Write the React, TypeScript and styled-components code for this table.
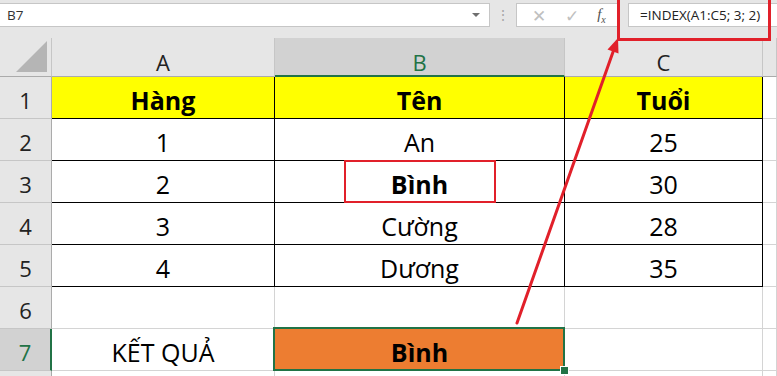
import { Fragment } from "react"
import styled, { createGlobalStyle } from "styled-components"

const GlobalStyle = createGlobalStyle`
    html, body {
        margin: 0;
        padding: 0;
        background: #ffffff;
    }
    * { box-sizing: border-box; }
`

const GREEN = '#217346'
const RED = '#e1202a'
const GRID = '#d4d4d4'

const Window = styled.div`
    position: relative;
    width: 777px;
    height: 376px;
    overflow: hidden;
    background: #ffffff;
    font-family: "Open Sans", "Noto Sans", sans-serif;
`

const FormulaBar = styled.div`
    display: flex;
    align-items: flex-start;
    height: 38px;
    padding-top: 3px;
    background: #e6e6e6;
`

const NameBox = styled.div`
    display: flex;
    align-items: center;
    justify-content: space-between;
    width: 490px;
    height: 24px;
    padding: 0 9px 0 7px;
    background: #ffffff;
    border: 1px solid #c6c6c6;
    border-left: none;
    font-size: 13.5px;
    color: #333333;
`

const Caret = styled.span`
    width: 0;
    height: 0;
    border-left: 4px solid transparent;
    border-right: 4px solid transparent;
    border-top: 4px solid #6f6f6f;
`

const Grip = styled.span`
    width: 26px;
    text-align: center;
    line-height: 24px;
    font-size: 14px;
    color: #a6a6a6;
`

const ActionBox = styled.div`
    display: flex;
    align-items: center;
    justify-content: space-around;
    width: 104px;
    height: 24px;
    padding: 0 4px 0 6px;
    background: #ffffff;
    border: 1px solid #c6c6c6;
`

const Action = styled.span<{ $dim?: boolean }>`
    font-size: 17px;
    line-height: 1;
    color: ${p => p.$dim ? '#c0c0c0' : '#505050'};
`

const Fx = styled.span`
    font-family: "Liberation Serif", "DejaVu Serif", serif;
    font-style: italic;
    font-size: 15px;
    color: #505050;
    sub { font-size: 10px; }
`

const FormulaWrap = styled.div`
    position: relative;
    flex: 1;
    padding-left: 8px;

    &::after {
        content: '';
        position: absolute;
        left: -3px;
        top: -6px;
        width: 148px;
        height: 38px;
        border: 3px solid ${RED};
        pointer-events: none;
    }
`

const FormulaInput = styled.div`
    height: 24px;
    padding-left: 11px;
    background: #ffffff;
    border: 1px solid #c6c6c6;
    border-right: none;
    font-size: 13.5px;
    line-height: 22px;
    color: #222222;
`

const Sheet = styled.div`
    display: grid;
    grid-template-columns: 52px 223px 290px 198px 1fr;
    grid-template-rows: 39px repeat(7, 42px) 1fr;
    height: 338px;
`

const Corner = styled.div`
    display: flex;
    align-items: flex-end;
    justify-content: flex-end;
    padding: 0 4px 4px 0;
    background: #e6e6e6;
    border-right: 1px solid #c6c6c6;
    border-bottom: 1px solid #ababab;
`

const SelectAll = styled.span`
    width: 31px;
    height: 31px;
    background: #b5b5b5;
    clip-path: polygon(100% 0, 100% 100%, 0 100%);
`

const ColHead = styled.div<{ $active?: boolean }>`
    display: flex;
    align-items: center;
    justify-content: center;
    padding-top: 10px;
    font-size: 22px;
    background: ${p => p.$active ? '#d2d2d2' : '#e6e6e6'};
    color: ${p => p.$active ? GREEN : '#222222'};
    border-right: 1px solid #c6c6c6;
    border-bottom: ${p => p.$active ? `2px solid ${GREEN}` : '1px solid #ababab'};
`

const RowHead = styled.div<{ $active?: boolean }>`
    display: flex;
    align-items: center;
    justify-content: center;
    padding-top: 5px;
    font-size: 22px;
    background: ${p => p.$active ? '#d2d2d2' : '#e6e6e6'};
    color: ${p => p.$active ? GREEN : '#222222'};
    border-right: ${p => p.$active ? `2px solid ${GREEN}` : '1px solid #ababab'};
    border-bottom: 1px solid #c6c6c6;
`

const Cell = styled.div<{ $fill?: string; $bold?: boolean; $ruled?: boolean; $selected?: boolean }>`
    position: relative;
    display: flex;
    align-items: center;
    justify-content: center;
    padding-top: 5px;
    font-size: 25px;
    font-weight: ${p => p.$bold ? 700 : 400};
    color: #000000;
    background: ${p => p.$fill ?? '#ffffff'};
    border-right: 1px solid ${p => p.$ruled ? '#000000' : GRID};
    border-bottom: 1px solid ${p => p.$ruled ? '#000000' : GRID};

    ${p => p.$selected && `
        &::after {
            content: '';
            position: absolute;
            left: -2px;
            top: -2px;
            right: -1px;
            bottom: -1px;
            border: 2px solid ${GREEN};
            z-index: 1;
        }
        &::before {
            content: '';
            position: absolute;
            right: -5px;
            bottom: -5px;
            width: 7px;
            height: 7px;
            background: ${GREEN};
            border: 1px solid #ffffff;
            z-index: 2;
        }
    `}
`

// red frame drawn round a single value inside its cell
const Marked = styled.span`
    display: flex;
    align-items: center;
    justify-content: center;
    width: 152px;
    align-self: stretch;
    margin-top: -6px;
    margin-bottom: -1px;
    padding-top: 5px;
    border: 2px solid ${RED};
`

const Pointer = styled.svg`
    position: absolute;
    inset: 0;
    pointer-events: none;
`

const columns = ['A', 'B', 'C']

const rows: { values: string[]; marked?: number }[] = [
    { values: ['Hàng', 'Tên', 'Tuổi'] },
    { values: ['1', 'An', '25'] },
    { values: ['2', 'Bình', '30'], marked: 1 },
    { values: ['3', 'Cường', '28'] },
    { values: ['4', 'Dương', '35'] },
]

export default function App() {
    return (
        <Window>
            <GlobalStyle />
            <FormulaBar>
                <NameBox>
                    <span>B7</span>
                    <Caret />
                </NameBox>
                <Grip>⋮</Grip>
                <ActionBox>
                    <Action $dim>✕</Action>
                    <Action $dim>✓</Action>
                    <Fx>f<sub>x</sub></Fx>
                </ActionBox>
                <FormulaWrap>
                    <FormulaInput>=INDEX(A1:C5; 3; 2)</FormulaInput>
                </FormulaWrap>
            </FormulaBar>

            <Sheet>
                <Corner><SelectAll /></Corner>
                {columns.map(c => <ColHead key={c} $active={c === 'B'}>{c}</ColHead>)}
                <ColHead />

                {rows.map((row, r) => (
                    <Fragment key={r}>
                        <RowHead>{r + 1}</RowHead>
                        {row.values.map((v, c) => (
                            <Cell key={c} $ruled $bold={r === 0 || row.marked === c} $fill={r === 0 ? '#ffff00' : undefined}>
                                {row.marked === c ? <Marked>{v}</Marked> : v}
                            </Cell>
                        ))}
                        <Cell />
                    </Fragment>
                ))}

                <RowHead>6</RowHead>
                <Cell /><Cell /><Cell /><Cell />

                <RowHead $active>7</RowHead>
                <Cell>KẾT QUẢ</Cell>
                <Cell $fill="#ed7d31" $bold $selected>Bình</Cell>
                <Cell /><Cell />

                <RowHead />
                <Cell /><Cell /><Cell /><Cell />
            </Sheet>

            <Pointer width="777" height="376" viewBox="0 0 777 376">
                <line x1="517" y1="323" x2="613" y2="52" stroke={RED} strokeWidth="3" strokeLinecap="round" />
                <polygon points="618,38 618.5,53.5 607.5,49.5" fill={RED} />
            </Pointer>
        </Window>
    )
}
